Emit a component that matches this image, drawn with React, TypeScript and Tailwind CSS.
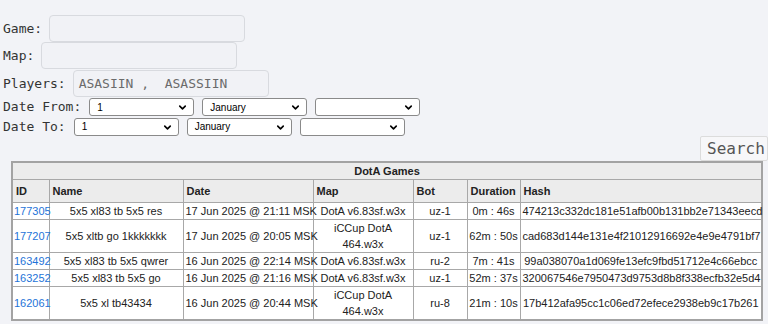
import { ChevronDown } from "lucide-react";

const games = [
  { id: "177305", name: "5x5 xl83 tb 5x5 res", date: "17 Jun 2025 @ 21:11 MSK", map: "DotA v6.83sf.w3x", bot: "uz-1", dur: "0m : 46s", hash: "474213c332dc181e51afb00b131bb2e71343eecd" },
  { id: "177207", name: "5x5 xltb go 1kkkkkkk", date: "17 Jun 2025 @ 20:05 MSK", map: "iCCup DotA 464.w3x", bot: "uz-1", dur: "62m : 50s", hash: "cad683d144e131e4f21012916692e4e9e4791bf7" },
  { id: "163492", name: "5x5 xl83 tb 5x5 qwrer", date: "16 Jun 2025 @ 22:14 MSK", map: "DotA v6.83sf.w3x", bot: "ru-2", dur: "7m : 41s", hash: "99a038070a1d069fe13efc9fbd51712e4c66ebcc" },
  { id: "163252", name: "5x5 xl83 tb 5x5 go", date: "16 Jun 2025 @ 21:16 MSK", map: "DotA v6.83sf.w3x", bot: "uz-1", dur: "52m : 37s", hash: "320067546e7950473d9753d8b8f338ecfb32e5d4" },
  { id: "162061", name: "5x5 xl tb43434", date: "16 Jun 2025 @ 20:44 MSK", map: "iCCup DotA 464.w3x", bot: "ru-8", dur: "21m : 10s", hash: "17b412afa95cc1c06ed72efece2938eb9c17b261" },
];

function Select({ value }: { value: string }) {
  return (
    <div className="relative w-[105px] h-[18px] bg-white border border-[#8a8a8a] rounded-[3px] flex items-center pl-[7px] text-[10px] text-black font-['Liberation_Sans',Arial,sans-serif]">
      <span>{value}</span>
      <ChevronDown className="absolute right-[5px] top-[3px] w-[11px] h-[11px]" strokeWidth={3.5} />
    </div>
  );
}

function TextRow({ label, value }: { label: string; value?: string }) {
  return (
    <div className="flex items-center h-[27px] pl-[3px]">
      <span className="mr-[7px]">{label}</span>
      <div className="w-[196px] h-[27px] border border-[#d8dadf] rounded-[4px] bg-[#f1f2f6] flex items-center pl-[5px] text-[#6b6b6b] whitespace-pre">
        {value}
      </div>
    </div>
  );
}

export default function App() {
  return (
    <div className="min-h-[324px] w-[768px] overflow-hidden bg-[#f2f3f7] font-['DejaVu_Sans_Mono',monospace] text-[13px] text-[#333]">
      <div className="pt-[15px]">
        <TextRow label="Game:" />
        <TextRow label="Map:" />
        <div className="h-[1px]" />
        <TextRow label="Players:" value="ASASIIN ,  ASASSIIN" />
        <div className="flex items-center gap-[8px] pl-[3px] mt-[1px] h-[18px]">
          <span>Date From:</span>
          <Select value="1" />
          <Select value="January" />
          <Select value="" />
        </div>
        <div className="flex items-center gap-[8px] pl-[3px] mt-[1px] h-[19px]">
          <span>Date To:</span>
          <Select value="1" />
          <Select value="January" />
          <Select value="" />
        </div>
        <div className="flex justify-end">
          <button className="h-[25px] w-[68px] border border-[#dcdcdc] bg-[#f7f7f9] rounded-[2px] text-[16px] text-[#555] pl-[6px] text-left">
            Search
          </button>
        </div>
        <table className="ml-[11px] w-[750px] border-collapse border-2 border-[#a3a3a3] bg-white text-[11px] leading-[16px] text-[#222] font-['Liberation_Sans',Arial,sans-serif] table-fixed">
          <colgroup>
            <col className="w-[37px]" />
            <col className="w-[134px]" />
            <col className="w-[130px]" />
            <col className="w-[100px]" />
            <col className="w-[54px]" />
            <col className="w-[53px]" />
            <col className="w-[242px]" />
          </colgroup>
          <thead>
            <tr className="bg-[#ececec]">
              <th colSpan={7} className="border border-[#a8a8a8] font-bold text-center h-[17px] py-0">
                DotA Games
              </th>
            </tr>
            <tr className="bg-[#ececec] text-left">
              {["ID", "Name", "Date", "Map", "Bot", "Duration", "Hash"].map((h) => (
                <th key={h} className="border border-[#a8a8a8] font-bold px-[3px] h-[23px]">
                  {h}
                </th>
              ))}
            </tr>
          </thead>
          <tbody>
            {games.map((g) => (
              <tr key={g.id}>
                <td className="border border-[#a8a8a8] px-[1px] text-[#1e73d8]">{g.id}</td>
                <td className="border border-[#a8a8a8] px-[2px] text-center">{g.name}</td>
                <td className="border border-[#a8a8a8] px-[2px] whitespace-nowrap">{g.date}</td>
                <td className="border border-[#a8a8a8] px-[2px] text-center">{g.map}</td>
                <td className="border border-[#a8a8a8] px-[2px] text-center">{g.bot}</td>
                <td className="border border-[#a8a8a8] px-[1px] text-center whitespace-nowrap">{g.dur}</td>
                <td className="border border-[#a8a8a8] px-[2px] text-center whitespace-nowrap">{g.hash}</td>
              </tr>
            ))}
          </tbody>
        </table>
      </div>
    </div>
  );
}
